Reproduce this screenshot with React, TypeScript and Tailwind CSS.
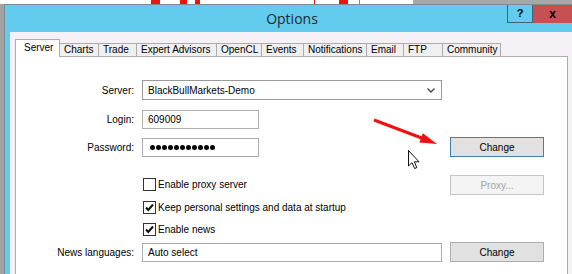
import React from 'react'

const TABS = [
  { label: 'Charts', w: 'w-[39px]' },
  { label: 'Trade', w: 'w-[38px]' },
  { label: 'Expert Advisors', w: 'w-[80px]' },
  { label: 'OpenCL', w: 'w-[45px]' },
  { label: 'Events', w: 'w-[42px]' },
  { label: 'Notifications', w: 'w-[63px]' },
  { label: 'Email', w: 'w-[37px]' },
  { label: 'FTP', w: 'w-[39px]' },
  { label: 'Community', w: 'w-[58px]' },
]

const Checkbox = ({ checked }: { checked: boolean }) => (
  <div className="w-[13px] h-[13px] border border-[#333] bg-white flex items-center justify-center shrink-0">
    {checked && (
      <svg width="9" height="9" viewBox="0 0 9 9">
        <path d="M1 4.5 L3.3 7 L8 1.5" fill="none" stroke="#111" strokeWidth="2" />
      </svg>
    )}
  </div>
)

const Button = ({ label, focused, disabled }: { label: string; focused?: boolean; disabled?: boolean }) => (
  <div
    className={`h-[20px] w-[94px] flex items-center justify-center border ${
      disabled
        ? 'bg-[#f4f4f4] border-[#c4c4c4] text-[#a3a3a3]'
        : focused
          ? 'bg-[#e1e1e1] border-[#3c7fb1] text-black'
          : 'bg-[#e1e1e1] border-[#adadad] text-black'
    }`}
  >
    {label}
  </div>
)

export default function App() {
  return (
    <div className="w-[572px] h-[274px] overflow-hidden bg-white relative flex flex-col font-['Liberation_Sans',Arial,sans-serif] text-[10px] text-black">
      {/* background window peeking above */}
      <div className="h-[4px] relative shrink-0 bg-white">
        <div className="absolute left-[151px] top-0 w-[9px] h-[4px] bg-[#ee1111]" />
        <div className="absolute left-[180px] top-0 w-[7px] h-[4px] bg-[#ee1111]" />
        <div className="absolute left-[195px] top-0 w-[5px] h-[4px] bg-[#ee1111]" />
        <div className="absolute left-[314px] top-0 w-[1px] h-[4px] bg-[#ee1111]" />
        <div className="absolute left-[339px] top-0 w-[9px] h-[4px] bg-[#ee1111]" />
        <div className="absolute left-[359px] top-0 w-[1px] h-[4px] bg-[#8a8a8a]" />
        <div className="absolute left-[413px] top-0 right-0 h-[4px] bg-[#a7a7a7]" />
      </div>

      <div className="flex flex-1 min-h-0">
        <div className="w-[4px] bg-[#a2a2a2] shrink-0" />
        <div className="flex-1 flex flex-col border-l border-t border-[#7d8a90] bg-[#63cbee]">
          {/* title bar */}
          <div className="h-[27px] relative shrink-0 flex items-center justify-center pl-[7px]">
            <span className="font-['Open_Sans',sans-serif] text-[14px] text-[#1e2a30]">Options</span>
            <div className="absolute right-0 top-0 flex">
              <div className="w-[26px] h-[18px] border border-[#3b6878] border-t-0 flex items-center justify-center font-bold text-[11px] text-black">
                ?
              </div>
              <div className="w-[39px] h-[18px] bg-[#c75050] flex items-center justify-center font-bold text-[12px] text-black">
                x
              </div>
            </div>
          </div>

          {/* client area */}
          <div className="flex-1 flex min-h-0">
            <div className="w-[5px] shrink-0" />
            <div className="flex-1 bg-[#f5f1f6] flex flex-col pt-[7px]">
              {/* tabs */}
              <div className="flex items-end h-[17px] ml-[5px] shrink-0 relative z-10">
                <div className="w-[45px] h-[18px] -mb-[1px] bg-white border border-b-0 border-[#acacac] pl-[8px] pt-[1px] leading-[14px]">
                  Server
                </div>
                {TABS.map(t => (
                  <div
                    key={t.label}
                    className={`${t.w} h-[13px] bg-[#f0f0f0] border border-l-0 border-b-0 border-[#acacac] pl-[4px] leading-[12px] whitespace-nowrap`}
                  >
                    {t.label}
                  </div>
                ))}
              </div>

              {/* panel */}
              <div className="ml-[5px] w-[553px] h-[240px] shrink-0 bg-white border border-[#acacac] pt-[23px] relative">
                <div className="grid grid-cols-[118px_300px_94px] gap-x-[8px] items-center h-[20px]">
                  <div className="text-right">Server:</div>
                  <div className="h-[20px] border border-[#9a9a9a] flex items-center justify-between pl-[5px] pr-[6px]">
                    <span>BlackBullMarkets-Demo</span>
                    <svg width="8" height="5" viewBox="0 0 8 5">
                      <path d="M0.5 0.5 L4 4 L7.5 0.5" fill="none" stroke="#444" strokeWidth="1.3" />
                    </svg>
                  </div>
                  <div />
                </div>

                <div className="grid grid-cols-[118px_300px_94px] gap-x-[8px] items-center h-[19px] mt-[10px]">
                  <div className="text-right">Login:</div>
                  <div className="w-[117px] h-[19px] border border-[#abadb3] flex items-center pl-[5px]">609009</div>
                  <div />
                </div>

                <div className="grid grid-cols-[118px_300px_94px] gap-x-[8px] items-center h-[20px] mt-[8px]">
                  <div className="text-right">Password:</div>
                  <div className="w-[117px] h-[19px] border border-[#abadb3] flex items-center gap-[1px] pl-[7px]">
                    {Array.from({ length: 11 }).map((_, i) => (
                      <div key={i} className="w-[5px] h-[5px] rounded-full bg-black" />
                    ))}
                  </div>
                  <Button label="Change" focused />
                </div>

                <div className="grid grid-cols-[118px_300px_94px] gap-x-[8px] items-start h-[20px] mt-[18px]">
                  <div />
                  <div className="flex items-center gap-[2px] ml-[1px] mt-[2px]">
                    <Checkbox checked={false} />
                    <span>Enable proxy server</span>
                  </div>
                  <Button label="Proxy..." disabled />
                </div>

                <div className="grid grid-cols-[118px_300px_94px] gap-x-[8px] items-center h-[13px] mt-[5px]">
                  <div />
                  <div className="flex items-center gap-[2px] ml-[1px]">
                    <Checkbox checked />
                    <span>Keep personal settings and data at startup</span>
                  </div>
                  <div />
                </div>

                <div className="grid grid-cols-[118px_300px_94px] gap-x-[8px] items-center h-[13px] mt-[9px]">
                  <div />
                  <div className="flex items-center gap-[2px] ml-[1px]">
                    <Checkbox checked />
                    <span>Enable news</span>
                  </div>
                  <div />
                </div>

                <div className="grid grid-cols-[118px_300px_94px] gap-x-[8px] items-center h-[20px] mt-[7px]">
                  <div className="text-right">News languages:</div>
                  <div className="h-[19px] border border-[#abadb3] flex items-center pl-[5px]">Auto select</div>
                  <Button label="Change" />
                </div>

                {/* annotation arrow */}
                <svg className="absolute left-[355px] top-[60px]" width="90" height="40" viewBox="0 0 90 40">
                  <line x1="3" y1="3" x2="52" y2="21.5" stroke="#ee1111" strokeWidth="3" />
                  <polygon points="66,27 48.3,25.6 51.9,16.2" fill="#ee1111" />
                </svg>

                {/* mouse cursor */}
                <svg className="absolute left-[392px] top-[93px]" width="13" height="20" viewBox="0 0 13 20">
                  <path
                    d="M0.5 0.5 L0.5 16 L4 12.6 L6.6 18.5 L8.8 17.6 L6.3 11.8 L11 11.8 Z"
                    fill="#fff"
                    stroke="#111"
                    strokeWidth="1"
                  />
                </svg>
              </div>
            </div>
          </div>
        </div>
      </div>
    </div>
  )
}
